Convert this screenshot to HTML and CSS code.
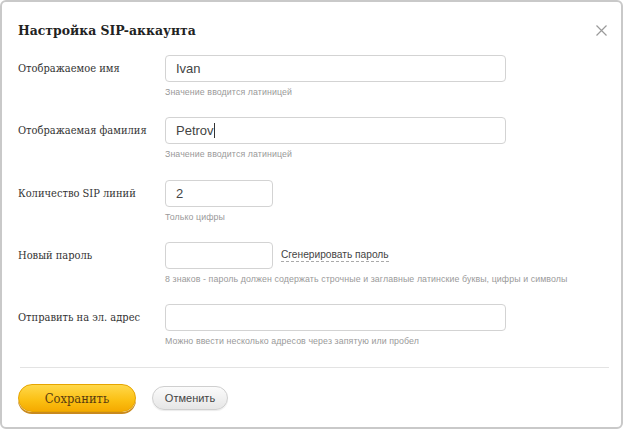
FILE: index.html
```html
<!DOCTYPE html>
<html lang="ru">
<head>
<meta charset="utf-8">
<link rel="stylesheet" href="styles.css">
</head>
<body>
<div class="dialog">
  <div class="head">
    <h1 class="title">Настройка SIP-аккаунта</h1>
    <svg class="close" width="11" height="11" viewBox="0 0 11 11"><path d="M0.5 0.5L10.5 10.5M10.5 0.5L0.5 10.5" stroke="#9a9a9a" stroke-width="1.2" fill="none"/></svg>
  </div>
  <div class="form">
    <div class="row">
      <div class="label">Отображаемое имя</div>
      <div class="field">
        <div class="input wide">Ivan</div>
        <div class="hint">Значение вводится латиницей</div>
      </div>
    </div>
    <div class="row">
      <div class="label">Отображаемая фамилия</div>
      <div class="field">
        <div class="input wide">Petrov<span class="caret"></span></div>
        <div class="hint">Значение вводится латиницей</div>
      </div>
    </div>
    <div class="row">
      <div class="label">Количество SIP линий</div>
      <div class="field">
        <div class="input short">2</div>
        <div class="hint">Только цифры</div>
      </div>
    </div>
    <div class="row">
      <div class="label">Новый пароль</div>
      <div class="field">
        <div class="line">
          <div class="input short"></div>
          <span class="gen">Сгенерировать пароль</span>
        </div>
        <div class="hint">8 знаков - пароль должен содержать строчные и заглавные латинские буквы, цифры и символы</div>
      </div>
    </div>
    <div class="row">
      <div class="label">Отправить на эл. адрес</div>
      <div class="field">
        <div class="input wide"></div>
        <div class="hint">Можно ввести несколько адресов через запятую или пробел</div>
      </div>
    </div>
  </div>
  <div class="divider"></div>
  <div class="actions">
    <button class="btn save">Сохранить</button>
    <button class="btn cancel">Отменить</button>
  </div>
</div>
</body>
</html>
```
FILE: styles.css
```css
* { box-sizing: border-box; }
html, body { margin: 0; padding: 0; background: #fff; }
body { width: 626px; height: 431px; overflow: hidden; }
.dialog {
  width: 623px;
  height: 429px;
  border: 2px solid #c9c9c9;
  border-radius: 6px;
  background: #fff;
  padding: 0 14px 0 16px;
}
.head {
  display: flex;
  align-items: center;
  justify-content: space-between;
  height: 53px;
  padding-top: 2px;
}
.title {
  margin: 0;
  font-family: "DejaVu Serif Condensed", "DejaVu Serif", serif;
  font-weight: bold;
  font-size: 13.8px;
  color: #222;
}
.close { margin-top: 1px; }
.form {
  display: flex;
  flex-direction: column;
  gap: 19.25px;
}
.row {
  display: grid;
  grid-template-columns: 147px 1fr;
}
.label {
  height: 27px;
  display: flex;
  align-items: center;
  font-family: "DejaVu Serif Condensed", "DejaVu Serif", serif;
  font-size: 11px;
  color: #333;
}
.field { display: flex; flex-direction: column; }
.line { display: flex; align-items: center; gap: 8px; }
.input {
  height: 27px;
  border: 1px solid #d3d3d3;
  border-radius: 4px;
  padding: 0 10px;
  font-family: "Liberation Sans", Arial, sans-serif;
  font-size: 13px;
  color: #444;
  display: flex;
  align-items: center;
}
.wide { width: 341px; }
.short { width: 108px; }
.caret { display: inline-block; width: 1px; height: 15px; background: #333; }
.gen {
  font-family: "Liberation Sans", Arial, sans-serif;
  font-size: 10.2px;
  color: #444;
  border-bottom: 1px dashed #aaa;
  line-height: 13px;
}
.hint {
  margin-top: 4px;
  line-height: 12px;
  font-family: "Liberation Sans", Arial, sans-serif;
  font-size: 8.8px;
  letter-spacing: 0.1px;
  color: #9a9a9a;
  white-space: nowrap;
}
.divider {
  margin-top: 20px;
  height: 1px;
  background: #e3e3e3;
  margin-left: 2px;
  width: 589px;
}
.actions {
  display: flex;
  align-items: center;
  gap: 16px;
  margin-top: 16px;
}
.btn { cursor: pointer; padding: 0; }
.save {
  width: 118px;
  height: 28px;
  border-radius: 14px;
  border: 1px solid #e6a500;
  background: linear-gradient(#ffd84a, #fbbf12 60%, #f5aa00);
  box-shadow: 0 2px 0 #c98a1e;
  font-family: "DejaVu Serif Condensed", "DejaVu Serif", serif;
  font-size: 12.8px;
  color: #5a3c10;
}
.cancel {
  width: 76px;
  height: 24px;
  border-radius: 12px;
  border: 1px solid #cfcfcf;
  background: linear-gradient(#fbfbfb, #e6e6e6);
  box-shadow: 0 1px 1px rgba(0,0,0,0.08);
  font-family: "Liberation Sans", Arial, sans-serif;
  font-size: 11px;
  color: #444;
}
```
